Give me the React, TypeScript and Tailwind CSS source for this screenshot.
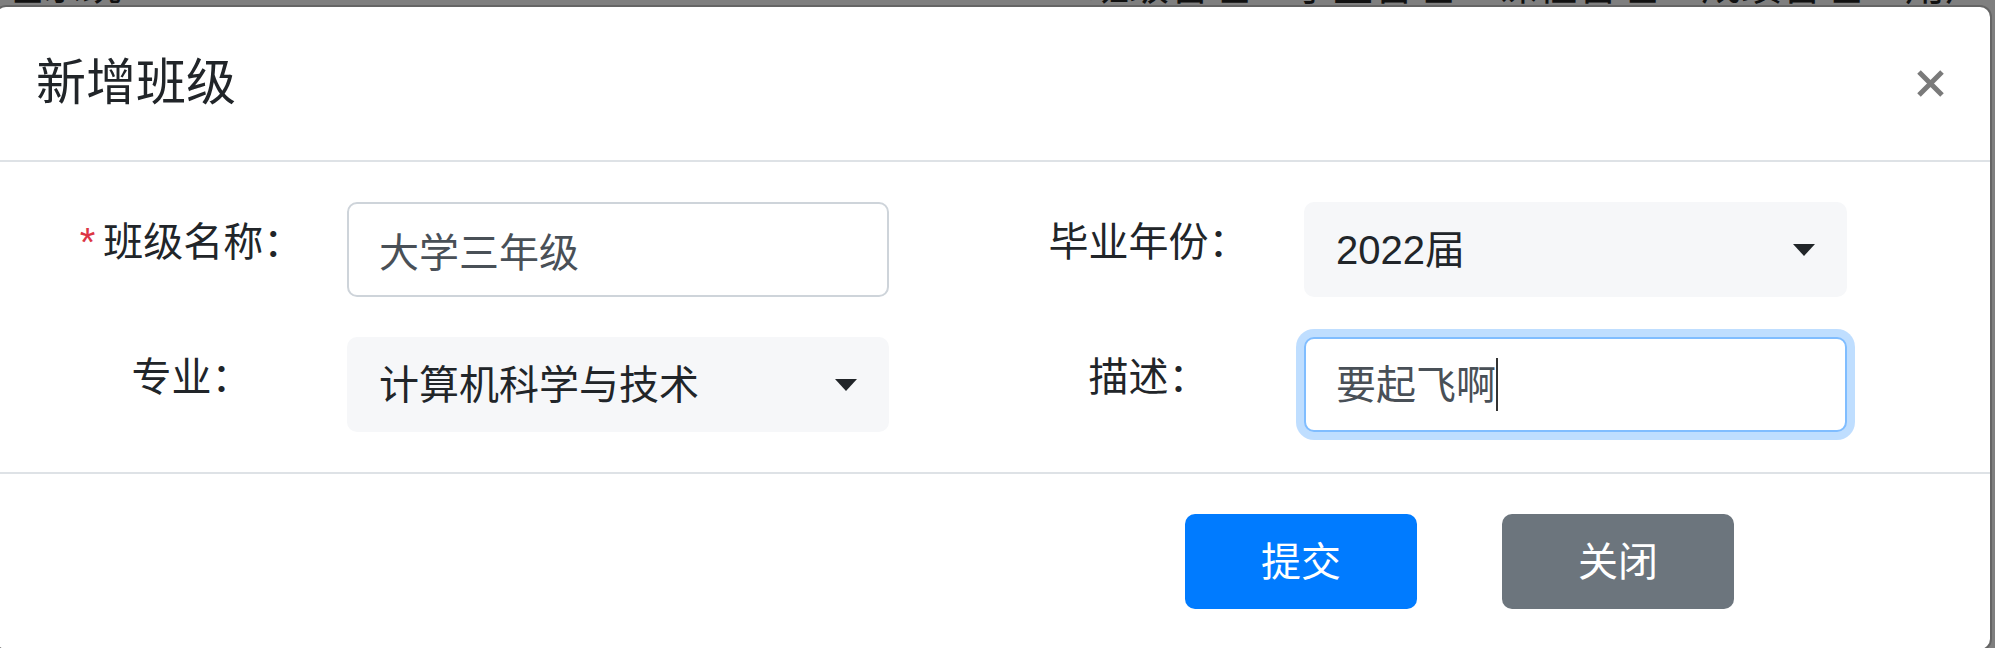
import React from "react";

function Caret() {
  return (
    <svg width="22" height="12" viewBox="0 0 22 12" className="shrink-0">
      <polygon points="0,0 22,0 11,12" fill="#212529" />
    </svg>
  );
}

function Label({ text, required }: { text: string; required?: boolean }) {
  return (
    <div className="w-[311px] shrink-0 pt-[10px] text-center leading-[60px] text-[#212529]">
      {required && <span className="mr-[8px] text-[#dc3545]">*</span>}
      {text}
    </div>
  );
}

export default function App() {
  return (
    <div className="relative h-[648px] w-[1995px] overflow-hidden bg-[#7f7f7f] pt-[5px] font-['Liberation_Sans','Noto_Sans_CJK_SC',sans-serif] text-[40px]">
      {/* page behind the backdrop, only its lower edge shows */}
      <div className="absolute left-0 top-[-44px] flex w-full text-[40px] leading-[60px] text-[#111]">
        <span className="-ml-[38px]">管理系统</span>
        <div className="ml-auto flex gap-[44px] pr-[10px]">
          <span>班级管理</span>
          <span>学生管理</span>
          <span>课程管理</span>
          <span>成绩管理</span>
          <span>用户</span>
        </div>
      </div>

      <div className="relative -ml-[6px] w-[1998px] rounded-[12px] border-[2.5px] border-black/20 bg-white bg-clip-padding">
        <div className="flex items-center justify-between border-b-[2.5px] border-[#dee2e6] px-[40px] py-[39px]">
          <h5 className="text-[50px] font-normal leading-[75px] text-[#212529]">新增班级</h5>
          <button className="mr-[6px]" aria-label="Close">
            <svg width="27" height="27" viewBox="0 0 27 27">
              <path d="M2 2 L25 25 M25 2 L2 25" stroke="#7a7a7a" strokeWidth="5" />
            </svg>
          </button>
        </div>

        <div className="grid grid-cols-2 gap-y-[40px] p-[40px]">
          <div className="flex">
            <Label text="班级名称：" required />
            <input
              readOnly
              value="大学三年级"
              className="h-[95px] w-[542px] rounded-[10px] border-[2.5px] border-[#ced4da] bg-white px-[30px] text-[40px] text-[#495057] outline-none"
            />
          </div>
          <div className="flex">
            <Label text="毕业年份：" />
            <div className="flex h-[95px] w-[543px] items-center justify-between rounded-[10px] bg-[#f6f7f9] pl-[32px] pr-[32px] leading-[60px] text-[#212529]">
              <span>2022届</span>
              <Caret />
            </div>
          </div>
          <div className="flex">
            <Label text="专业：" />
            <div className="flex h-[95px] w-[542px] items-center justify-between rounded-[10px] bg-[#f6f7f9] pl-[32px] pr-[32px] leading-[60px] text-[#212529]">
              <span>计算机科学与技术</span>
              <Caret />
            </div>
          </div>
          <div className="flex">
            <Label text="描述：" />
            <div className="flex h-[95px] w-[543px] items-center rounded-[10px] border-[2.5px] border-[#80bdff] bg-white px-[30px] leading-[60px] text-[#495057] shadow-[0_0_0_8px_rgba(0,123,255,0.25)]">
              <span>要起飞啊</span>
              <span className="inline-block h-[53px] w-[2px] bg-[#333]" />
            </div>
          </div>
        </div>

        <div className="flex justify-end gap-[85px] border-t-[2.5px] border-[#dee2e6] pb-[40px] pr-[256px] pt-[40px]">
          <button className="h-[95px] w-[232px] rounded-[10px] bg-[#007bff] text-[40px] text-white">提交</button>
          <button className="h-[95px] w-[232px] rounded-[10px] bg-[#6c757d] text-[40px] text-white">关闭</button>
        </div>
      </div>
    </div>
  );
}
